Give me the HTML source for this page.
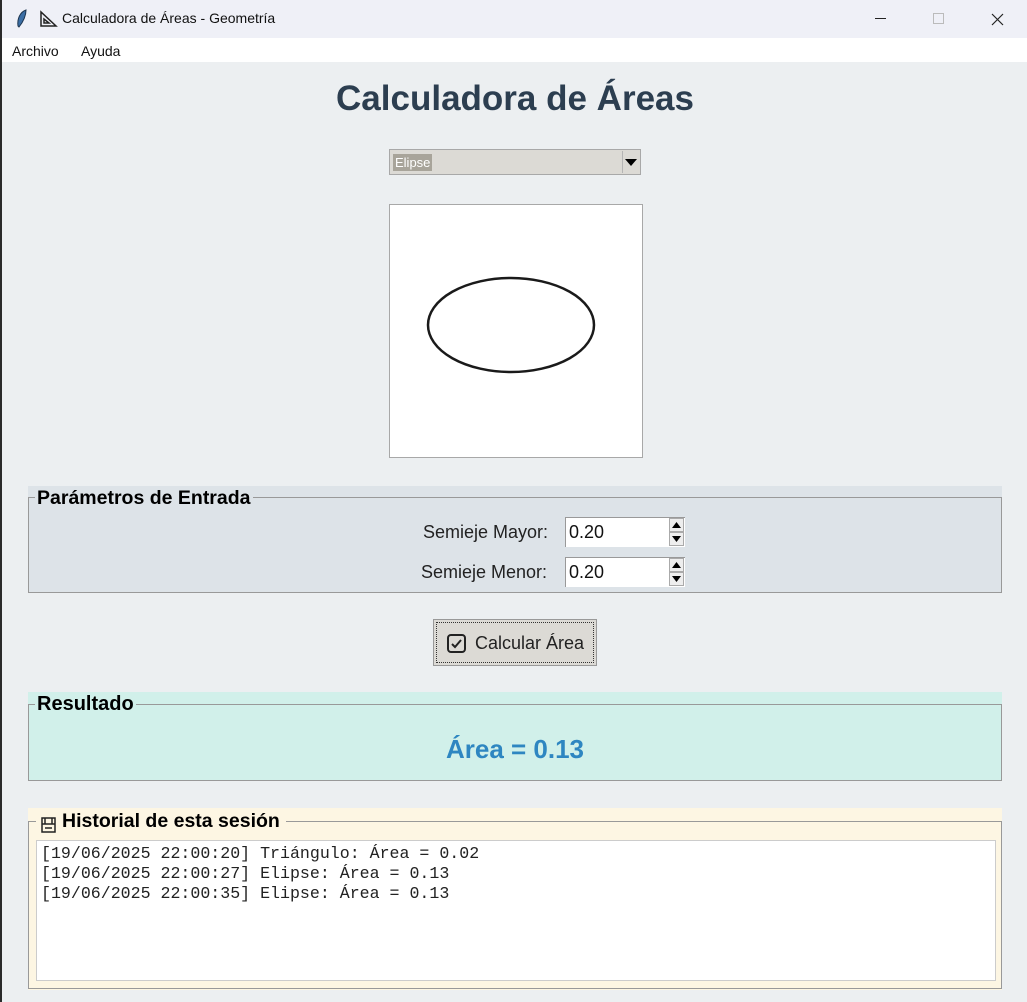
<!DOCTYPE html>
<html><head><meta charset="utf-8"><style>
*{margin:0;padding:0;box-sizing:border-box}
body{width:1027px;height:1002px;background:#eceff1;position:relative;overflow:hidden;font-family:"Liberation Sans",sans-serif}
.a{position:absolute}
</style></head><body>
<div class="a" style="left:0;top:0;width:2px;height:1002px;background:#2a2a2a"></div>
<div class="a" style="left:2px;top:0;width:1025px;height:38px;background:#eff0f7"></div>
<svg class="a" style="left:14px;top:9px" width="16" height="20"><path d="M12 1 C6 3 3 10 4 17 L5 18 C9 13 12 7 12 1Z" fill="#3b6ea5" stroke="#1d3550" stroke-width="1"/></svg>
<svg class="a" style="left:39px;top:10px" width="20" height="18"><path d="M2 2 L2 16 L17 16 Z M5 9 L5 13 L10 13 Z" fill="none" stroke="#222" stroke-width="1.5"/></svg>
<div class="a" style="left:62px;top:10px;font-size:14px;color:#111">Calculadora de Áreas - Geometría</div>
<div class="a" style="left:875px;top:18px;width:11px;height:1px;background:#222"></div>
<div class="a" style="left:933px;top:13px;width:11px;height:11px;border:1px solid #bbb"></div>
<svg class="a" style="left:991px;top:13px" width="13" height="13"><path d="M1 1 L12 12 M12 1 L1 12" stroke="#222" stroke-width="1.2"/></svg>
<div class="a" style="left:2px;top:38px;width:1025px;height:24px;background:#fff"></div>
<div class="a" style="left:12px;top:43px;font-size:14px;color:#111">Archivo</div>
<div class="a" style="left:81px;top:43px;font-size:14px;color:#111">Ayuda</div>

<div class="a" style="left:0;top:79px;width:1030px;text-align:center;font-size:35px;font-weight:bold;color:#2c3e50">Calculadora de Áreas</div>

<div class="a" style="left:389px;top:149px;width:252px;height:26px;background:#dcdad5;border:1px solid #a8a8a8"></div>
<div class="a" style="left:393px;top:154px;height:17px;padding:0 2px;background:#a8a49a;color:#fff;font-size:13px;line-height:17px">Elipse</div>
<div class="a" style="left:622px;top:151px;width:17px;height:22px;border-left:1px solid #b5b5b5"></div>
<svg class="a" style="left:624px;top:157px" width="14" height="10"><path d="M1 2 L13 2 L7 9Z" fill="#000"/></svg>

<div class="a" style="left:389px;top:204px;width:254px;height:254px;background:#fff;border:1px solid #a8a8a8"></div>
<svg class="a" style="left:389px;top:204px" width="254" height="254"><ellipse cx="122" cy="121" rx="83" ry="47" fill="none" stroke="#1a1a1a" stroke-width="2.5"/></svg>

<div class="a" style="left:28px;top:486px;width:974px;height:107px;background:#dde3e8"></div>
<div class="a" style="left:28px;top:497px;width:974px;height:96px;border:1px solid #999"></div>
<div class="a" style="left:35px;top:487px;padding:0 2px;background:#dde3e8;font-size:19.5px;font-weight:bold;color:#000">Parámetros de Entrada</div>
<div class="a" style="left:423px;top:522px;font-size:18px;color:#222">Semieje Mayor:</div>
<div class="a" style="left:421px;top:562px;font-size:18px;color:#222">Semieje Menor:</div>
<div class="a" style="left:565px;top:517px;width:120px;height:30px;background:#fff;border-top:1px solid #999;border-left:1px solid #999"></div>
<div class="a" style="left:565px;top:557px;width:120px;height:30px;background:#fff;border-top:1px solid #999;border-left:1px solid #999"></div>
<div class="a" style="left:569px;top:522px;font-size:18px;color:#111">0.20</div>
<div class="a" style="left:569px;top:562px;font-size:18px;color:#111">0.20</div>
<svg class="a" style="left:669px;top:518px" width="16" height="29"><rect x="0.5" y="0.5" width="14" height="13" fill="#eee" stroke="#aaa"/><rect x="0.5" y="14.5" width="14" height="13" fill="#eee" stroke="#aaa"/><path d="M3 10 L12 10 L7.5 4Z M3 18 L12 18 L7.5 24Z" fill="#000"/></svg>
<svg class="a" style="left:669px;top:558px" width="16" height="29"><rect x="0.5" y="0.5" width="14" height="13" fill="#eee" stroke="#aaa"/><rect x="0.5" y="14.5" width="14" height="13" fill="#eee" stroke="#aaa"/><path d="M3 10 L12 10 L7.5 4Z M3 18 L12 18 L7.5 24Z" fill="#000"/></svg>

<div class="a" style="left:433px;top:619px;width:164px;height:47px;background:#dcdad5;border:1px solid #999"></div>
<div class="a" style="left:436px;top:622px;width:158px;height:41px;border:1px dotted #333"></div>
<svg class="a" style="left:446px;top:633px" width="22" height="22"><rect x="2" y="2" width="17" height="17" rx="3" fill="none" stroke="#222" stroke-width="2"/><path d="M6 11 L9 14 L15 7" fill="none" stroke="#222" stroke-width="2"/></svg>
<div class="a" style="left:475px;top:633px;font-size:18px;color:#222">Calcular Área</div>

<div class="a" style="left:28px;top:692px;width:974px;height:89px;background:#d1f0ea"></div>
<div class="a" style="left:28px;top:704px;width:974px;height:77px;border:1px solid #999"></div>
<div class="a" style="left:35px;top:693px;padding:0 2px;background:#d1f0ea;font-size:20px;font-weight:bold;color:#000">Resultado</div>
<div class="a" style="left:0;top:734px;width:1030px;text-align:center;font-size:26px;font-weight:bold;color:#2e86c1">Área = 0.13</div>

<div class="a" style="left:28px;top:808px;width:974px;height:182px;background:#fdf6e3"></div>
<div class="a" style="left:28px;top:821px;width:974px;height:168px;border:1px solid #999"></div>
<div class="a" style="left:36px;top:810px;width:250px;height:22px;background:#fdf6e3"></div>
<svg class="a" style="left:40px;top:816px" width="17" height="18"><path d="M2 2 H15 V16 H2 Z M2 8 H15 M5 2 V8 M12 2 V8 M5 12 H12" fill="none" stroke="#222" stroke-width="1.5"/></svg>
<div class="a" style="left:62px;top:810px;font-size:19.5px;font-weight:bold;color:#000">Historial de esta sesión</div>
<div class="a" style="left:36px;top:840px;width:960px;height:141px;background:#fff;border:1px solid #ccc"></div>
<div class="a" style="left:41px;top:844px;font-family:'Liberation Mono',monospace;font-size:16.6px;line-height:20px;color:#222;white-space:pre">[19/06/2025 22:00:20] Triángulo: Área = 0.02
[19/06/2025 22:00:27] Elipse: Área = 0.13
[19/06/2025 22:00:35] Elipse: Área = 0.13</div>
</body></html>
